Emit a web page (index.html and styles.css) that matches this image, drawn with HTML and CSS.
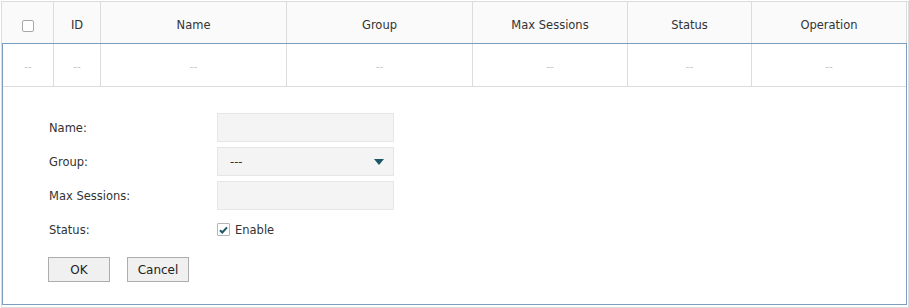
FILE: index.html
```html
<!DOCTYPE html>
<html lang="en">
<head>
    <meta charset="UTF-8">
    <title>Users</title>
    <link rel="stylesheet" href="styles.css">
</head>
<body>
    <div class="grid-wrap">
        <div class="grid-head">
            <div class="cell"><span class="check-box"></span></div>
            <div class="cell">ID</div>
            <div class="cell">Name</div>
            <div class="cell">Group</div>
            <div class="cell">Max Sessions</div>
            <div class="cell">Status</div>
            <div class="cell">Operation</div>
        </div>

        <div class="edit-box">
            <div class="grid-row">
                <div class="cell">--</div>
                <div class="cell">--</div>
                <div class="cell">--</div>
                <div class="cell">--</div>
                <div class="cell">--</div>
                <div class="cell">--</div>
                <div class="cell">--</div>
            </div>

            <form class="edit-form">
                <div class="form-row">
                    <label class="form-label">Name:</label>
                    <input class="text-input" type="text">
                </div>
                <div class="form-row">
                    <label class="form-label">Group:</label>
                    <div class="select-box">
                        <span>---</span>
                        <svg class="select-arrow" width="10" height="6" viewBox="0 0 10 6">
                            <path d="M0 0h10L5 6z" fill="#1d5666"/>
                        </svg>
                    </div>
                </div>
                <div class="form-row">
                    <label class="form-label">Max Sessions:</label>
                    <input class="text-input" type="text">
                </div>
                <div class="form-row">
                    <label class="form-label">Status:</label>
                    <span class="check-box checked">
                        <svg width="9" height="8" viewBox="0 0 9 8">
                            <path d="M1 4.2l2.3 2.3L8 1.3" fill="none" stroke="#1d5666" stroke-width="2"/>
                        </svg>
                    </span>
                    <span class="check-text">Enable</span>
                </div>
                <div class="form-buttons">
                    <button type="button" class="btn">OK</button>
                    <button type="button" class="btn">Cancel</button>
                </div>
            </form>
        </div>
    </div>
</body>
</html>
```

FILE: styles.css
```css
* {
    margin: 0;
    padding: 0;
    box-sizing: border-box;
}

body {
    font-family: "DejaVu Sans", Verdana, sans-serif;
    font-size: 11.5px;
    color: #333;
    background: #fff;
    padding: 1px 0 0 1px;
}

.grid-wrap {
    width: 908px;
    height: 307px;
    border: 1px solid #dcdcdc;
    padding: 0 1px 2px 0;
}

.grid-head,
.grid-row {
    display: grid;
    grid-template-columns: 52px 47px 186px 186px 155px 124px 155px;
}

.grid-head {
    height: 41px;
    background: #fafafa;
}

.grid-row {
    grid-template-columns: 51px 47px 186px 186px 155px 124px 154px;
    height: 43px;
    border-bottom: 1px solid #dcdcdc;
    color: #c4c4c4;
    font-size: 10.5px;
}

.cell {
    display: flex;
    align-items: center;
    justify-content: center;
    border-right: 1px solid #dcdcdc;
}

.grid-head .cell {
    padding-top: 5px;
}

.grid-row .cell {
    padding-top: 1px;
}

.grid-row .cell:last-child {
    border-right: none;
}

.check-box {
    display: inline-flex;
    align-items: center;
    justify-content: center;
    width: 12px;
    height: 12px;
    border: 1px solid #a8a8a8;
    border-radius: 2px;
    background: #fff;
}

.grid-head .check-box {
    margin-top: 1px;
}

.edit-box {
    width: 905px;
    height: 262px;
    border: 1px solid #7b9ebf;
}

.edit-form {
    padding: 26px 0 0 46px;
}

.form-row {
    display: flex;
    align-items: center;
    height: 29px;
    margin-bottom: 5px;
}

.form-label {
    width: 168px;
}

.text-input,
.select-box {
    width: 177px;
    height: 29px;
    background: #f4f4f4;
    border: 1px solid #e6e6e6;
    font-family: inherit;
    font-size: inherit;
    outline: none;
}

.select-box {
    display: flex;
    align-items: center;
    justify-content: space-between;
    padding: 0 9px 0 12px;
}

.check-box.checked {
    width: 13px;
    height: 13px;
    border-radius: 1px;
    border-color: #b5b5b5;
}

.check-text {
    margin-left: 5px;
}

.form-buttons {
    display: flex;
    gap: 17px;
    margin: 13px 0 0 -1px;
}

.btn {
    width: 62px;
    height: 25px;
    background: #f0f0f0;
    border: 1px solid #adadad;
    font-family: inherit;
    font-size: 12px;
    color: #222;
}
```
